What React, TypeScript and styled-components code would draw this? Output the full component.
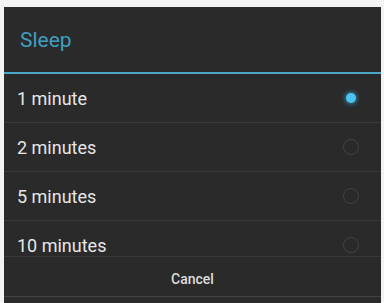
import React from "react";
import styled, { createGlobalStyle } from "styled-components";

const Global = createGlobalStyle`
  html, body { margin: 0; padding: 0; background: #f3f3f3; }
  body { font-family: Roboto, "Noto Sans", "Liberation Sans", sans-serif; }
`;

const Page = styled.div`
  width: 384px;
  height: 303px;
  padding: 7px 3px 0 4px;
  box-sizing: border-box;
  overflow: hidden;
  display: flex;
`;

const Dialog = styled.div`
  flex: 1;
  background: #2a2a2a;
  display: flex;
  flex-direction: column;
`;

const TitleBar = styled.div`
  height: 65px;
  display: flex;
  align-items: center;
  padding-left: 16px;
  font-size: 21px;
  color: #3e9ec0;
  border-bottom: 2px solid #4aa6c6;
`;

const List = styled.div`
  height: 182px;
  overflow: hidden;
  display: flex;
  flex-direction: column;
`;

const Row = styled.div`
  flex: 0 0 48px;
  display: flex;
  align-items: center;
  justify-content: space-between;
  padding: 0 22px 0 13px;
  border-bottom: 1px solid #3a3a3a;
  font-size: 18px;
  color: #e6e6e6;
`;

const Radio = styled.span<{ $on: boolean }>`
  width: 16px;
  height: 16px;
  border-radius: 50%;
  box-sizing: border-box;
  display: flex;
  align-items: center;
  justify-content: center;
  border: ${(p) => (p.$on ? "none" : "1.5px solid #434343")};
  &::after {
    content: "";
    display: ${(p) => (p.$on ? "block" : "none")};
    width: 10px;
    height: 10px;
    border-radius: 50%;
    background: #4cc4f0;
    box-shadow: 0 0 4px 1px rgba(60, 170, 230, 0.7);
  }
`;

const ButtonBar = styled.div`
  height: 41px;
  padding-top: 4px;
  box-sizing: border-box;
  display: flex;
  align-items: center;
  justify-content: center;
  border-top: 1px solid #3a3a3a;
  border-bottom: 1px solid #444;
  font-size: 14px;
  font-weight: 500;
  color: #dcdcdc;
`;

const options = ["1 minute", "2 minutes", "5 minutes", "10 minutes"];

export default function App() {
  return (
    <>
      <Global />
      <Page>
        <Dialog>
          <TitleBar>Sleep</TitleBar>
          <List>
            {options.map((o, i) => (
              <Row key={o}>
                <span>{o}</span>
                <Radio $on={i === 0} />
              </Row>
            ))}
          </List>
          <ButtonBar>Cancel</ButtonBar>
        </Dialog>
      </Page>
    </>
  );
}
